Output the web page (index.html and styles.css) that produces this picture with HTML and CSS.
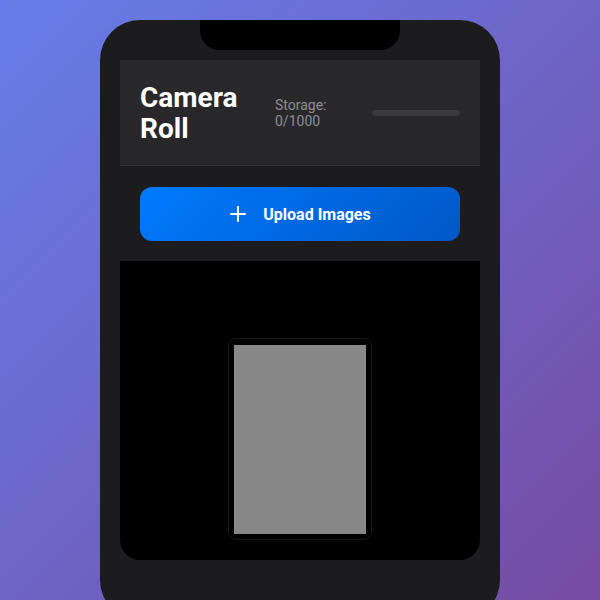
FILE: index.html
```html
<!DOCTYPE html>
<html>
<head>
<meta charset="utf-8">
<link rel="stylesheet" href="styles.css">
</head>
<body>
<div class="stage">
  <div class="phone">
    <div class="notch"></div>
    <div class="screen">
      <header class="header">
        <h1 class="title">Camera Roll</h1>
        <div class="storage-text">Storage: 0/1000</div>
        <div class="storage-bar"><div class="storage-fill"></div></div>
      </header>
      <div class="upload">
        <button class="upload-btn">
          <svg class="plus" width="18" height="18" viewBox="0 0 18 18"><path d="M9 2v14M2 9h14" stroke="#fff" stroke-width="2" stroke-linecap="round"/></svg>
          <span>Upload Images</span>
        </button>
      </div>
      <div class="gallery">
        <div class="photo-frame"><div class="photo"></div></div>
      </div>
    </div>
  </div>
</div>
</body>
</html>
```
FILE: styles.css
```css
html, body {
  margin: 0;
  padding: 0;
  height: 100%;
  overflow: hidden;
}
body {
  background: linear-gradient(135deg, #667eea 0%, #764ba2 100%);
  font-family: Roboto, "Liberation Sans", sans-serif;
}
.stage {
  display: flex;
  justify-content: center;
  padding-top: 20px;
}
.phone {
  position: relative;
  width: 400px;
  height: 600px;
  box-sizing: border-box;
  background: #1c1c1e;
  border-radius: 40px;
  padding: 40px 20px 20px;
}
.notch {
  position: absolute;
  top: 0;
  left: 100px;
  width: 200px;
  height: 30px;
  background: #000;
  border-radius: 0 0 20px 20px;
}
.screen {
  width: 360px;
  border-radius: 0 0 20px 20px;
  overflow: hidden;
  background: #1c1c1e;
}
.header {
  display: flex;
  align-items: center;
  padding: 20px;
  height: 106px;
  box-sizing: border-box;
  background: linear-gradient(180deg, #2a2a2c 0%, #262628 100%);
  border-bottom: 1px solid #333335;
}
.title {
  margin: 0;
  width: 135px;
  flex: 0 0 135px;
  color: #fff;
  font-size: 28px;
  font-weight: 700;
  line-height: 31px;
}
.storage-text {
  width: 97px;
  flex: 0 0 97px;
  color: #8e8e93;
  font-size: 14px;
  line-height: 16px;
}
.storage-bar {
  flex: 1;
  height: 6px;
  border-radius: 3px;
  background: #3a3a3c;
  overflow: hidden;
}
.storage-fill {
  width: 0;
  height: 100%;
}
.upload {
  padding: 21px 20px 20px;
}
.upload-btn {
  display: flex;
  align-items: center;
  justify-content: center;
  gap: 16px;
  width: 100%;
  height: 54px;
  border: none;
  border-radius: 12px;
  background: linear-gradient(135deg, #007aff 0%, #0058c6 100%);
  color: #fff;
  font-family: Roboto, "Liberation Sans", sans-serif;
  font-size: 16px;
  font-weight: 700;
  padding: 0;
}
.plus {
  display: block;
}
.gallery {
  background: #000;
  height: 299px;
  box-sizing: border-box;
  padding-top: 77px;
  display: flex;
  justify-content: center;
  align-items: flex-start;
}
.photo-frame {
  width: 144px;
  height: 202px;
  box-sizing: border-box;
  border: 1px solid #161616;
  border-radius: 8px;
  padding: 6px 5px 5px 5px;
  display: flex;
}
.photo {
  flex: 1;
  background: #878787;
}
```
